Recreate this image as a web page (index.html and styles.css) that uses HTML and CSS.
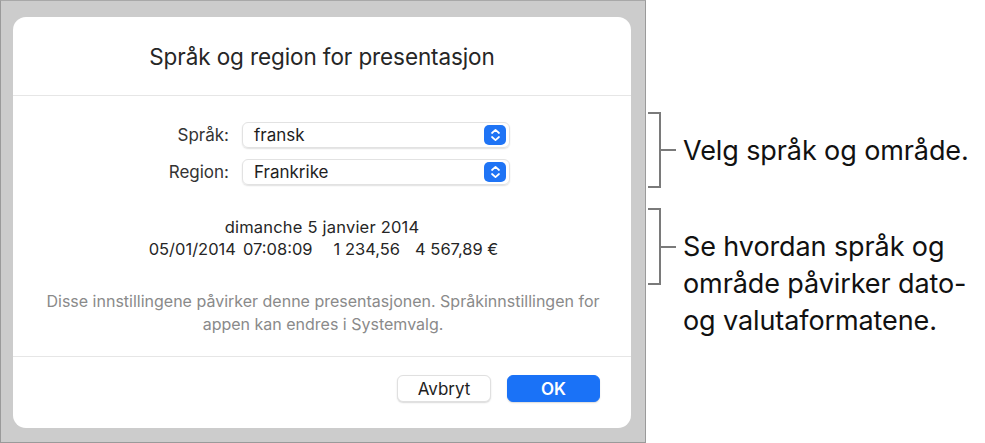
FILE: index.html
```html
<!DOCTYPE html>
<html lang="no">
<head>
  <meta charset="UTF-8">
  <meta name="viewport" content="width=device-width, initial-scale=1.0">
  <title>Språk og region</title>
  <link rel="stylesheet" href="styles.css">
</head>
<body>

  <div class="page">
    <div class="backdrop">
      <div class="dialog">
        <div class="dialog-title">Språk og region for presentasjon</div>

        <div class="dialog-body">
          <div class="form">
            <label class="form-label">Språk:</label>
            <div class="popup">
              <span>fransk</span>
              <span class="stepper">
                <svg width="11" height="14" viewBox="0 0 11 14"><path d="M2 5 L5.5 1.8 L9 5 M2 9 L5.5 12.2 L9 9" fill="none" stroke="#fff" stroke-width="1.7" stroke-linecap="round" stroke-linejoin="round"/></svg>
              </span>
            </div>
            <label class="form-label">Region:</label>
            <div class="popup">
              <span>Frankrike</span>
              <span class="stepper">
                <svg width="11" height="14" viewBox="0 0 11 14"><path d="M2 5 L5.5 1.8 L9 5 M2 9 L5.5 12.2 L9 9" fill="none" stroke="#fff" stroke-width="1.7" stroke-linecap="round" stroke-linejoin="round"/></svg>
              </span>
            </div>
          </div>

          <div class="sample">
            <div class="sample-long">dimanche 5 janvier 2014</div>
            <div class="sample-short">
              <span class="date">05/01/2014</span>
              <span class="time">07:08:09</span>
              <span class="number">1 234,56</span>
              <span class="money">4 567,89 €</span>
            </div>
          </div>

          <p class="note">Disse innstillingene påvirker denne presentasjonen. Språkinnstillingen for appen kan endres i Systemvalg.</p>
        </div>

        <div class="dialog-footer">
          <button class="btn">Avbryt</button>
          <button class="btn btn-primary">OK</button>
        </div>
      </div>
    </div>

    <div class="callouts">
      <div class="callout callout-one">
        <div class="bracket"></div>
        <div class="callout-text">Velg språk og område.</div>
      </div>
      <div class="callout callout-two">
        <div class="bracket"></div>
        <div class="callout-text">Se hvordan språk og<br>område påvirker dato-<br>og valutaformatene.</div>
      </div>
    </div>
  </div>

</body>
</html>
```

FILE: styles.css
```css
body, html {
  margin: 0;
  padding: 0;
  background: #fff;
}

.page {
  display: flex;
  width: 985px;
  height: 443px;
}

.backdrop {
  box-sizing: border-box;
  width: 646px;
  height: 443px;
  background: #cccccc;
  border: 1px solid #9a9a9a;
  border-top-color: #a8a8a8;
  padding: 16px 14px 0 12px;
}

.dialog {
  background: #fff;
  border-radius: 13px;
  height: 411px;
  font-family: Inter, "Noto Sans", sans-serif;
  display: flex;
  flex-direction: column;
}

.dialog-title {
  height: 77px;
  border-bottom: 1px solid #e6e6e6;
  display: flex;
  align-items: center;
  justify-content: center;
  padding-top: 1px;
  font-size: 22.5px;
  color: #262626;
  letter-spacing: -0.1px;
}

.dialog-body {
  flex: 1;
  border-bottom: 1px solid #e6e6e6;
}

.form {
  display: grid;
  grid-template-columns: 216px 268px;
  column-gap: 13px;
  row-gap: 11px;
  margin-top: 26px;
  align-items: center;
}

.form-label {
  text-align: right;
  font-size: 17px;
  color: #333;
}

.popup {
  box-sizing: border-box;
  height: 26px;
  border-radius: 6px;
  border: 1px solid #e2e2e2;
  box-shadow: 0 1px 1.5px rgba(0, 0, 0, 0.12);
  display: flex;
  align-items: center;
  justify-content: space-between;
  padding: 0 3px 0 11px;
  font-size: 17px;
  color: #1e1e1e;
}

.stepper {
  width: 22px;
  height: 20px;
  background: #1f74f5;
  border-radius: 5px;
  display: flex;
  align-items: center;
  justify-content: center;
}

.sample {
  margin-top: 31px;
  text-align: center;
  font-size: 16.5px;
  line-height: 22px;
  color: #262626;
}

.sample-long {
  letter-spacing: 0.2px;
}

.sample-short {
  display: flex;
  justify-content: center;
  padding-left: 3px;
}

.sample-short .time {
  margin-left: 7px;
}

.sample-short .number {
  margin-left: 21px;
}

.sample-short .money {
  margin-left: 15px;
}

.note {
  margin: 30px 25px 0 27px;
  text-align: center;
  font-size: 16px;
  line-height: 23px;
  color: #8a8a8a;
}

.dialog-footer {
  height: 71px;
  display: flex;
  justify-content: flex-end;
  align-items: flex-start;
  gap: 16px;
  padding: 18px 31px 0 0;
  box-sizing: border-box;
}

.btn {
  width: 94px;
  height: 27px;
  border-radius: 6px;
  border: 1px solid #e0e0e0;
  background: #fff;
  box-shadow: 0 1px 1.5px rgba(0, 0, 0, 0.15);
  font-family: Inter, "Noto Sans", sans-serif;
  font-size: 17px;
  color: #1e1e1e;
  padding: 0;
}

.btn-primary {
  width: 93px;
  background: #1a72f7;
  border-color: #1a72f7;
  color: #fff;
  font-weight: 600;
}

.callouts {
  padding-top: 112px;
  display: flex;
  flex-direction: column;
  gap: 20px;
}

.callout {
  display: flex;
  align-items: center;
  margin-left: 2px;
}

.callout-one {
  height: 76px;
}

.callout-two {
  height: 77px;
  align-items: flex-start;
}

.bracket {
  box-sizing: border-box;
  width: 13px;
  height: 100%;
  flex-shrink: 0;
  border: 2px solid #7a7a7a;
  border-left: none;
  position: relative;
}

.bracket::after {
  content: "";
  position: absolute;
  left: 11px;
  top: 50%;
  width: 17px;
  height: 2px;
  margin-top: -1px;
  background: #7a7a7a;
}

.callout-text {
  margin-left: 22px;
  font-family: Inter, "Noto Sans", sans-serif;
  font-size: 27px;
  color: #111;
  letter-spacing: -0.1px;
  white-space: nowrap;
}

.callout-two .callout-text {
  line-height: 37px;
  margin-top: 20px;
}
```
